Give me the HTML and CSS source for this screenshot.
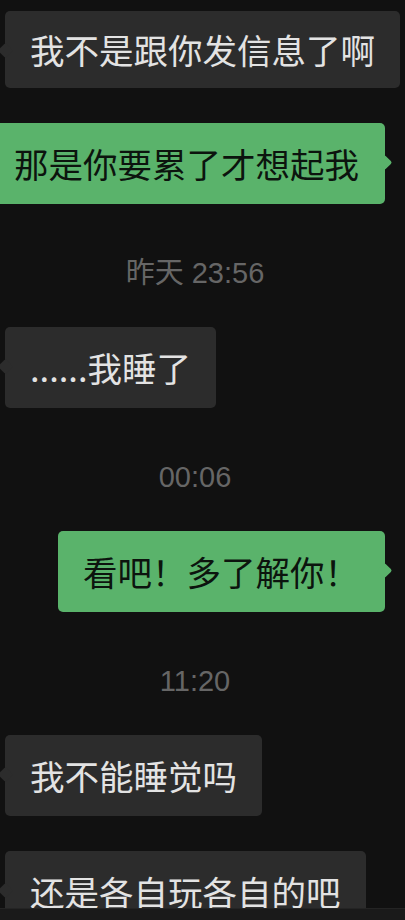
FILE: index.html
```html
<!DOCTYPE html>
<html lang="zh-CN">
  <head>
    <meta charset="utf-8">
    <title>聊天</title>
    <link rel="stylesheet" href="styles.css">
  </head>
  <body>
    <div class="screen">
      <div class="chat">
        <div class="row left first">
          <div class="bubble">我不是跟你发信息了啊</div>
        </div>
        <div class="row right">
          <div class="bubble">那是你要累了才想起我</div>
        </div>

        <div class="time">昨天 23:56</div>
        <div class="row left">
          <div class="bubble">......我睡了</div>
        </div>

        <div class="time">00:06</div>
        <div class="row right">
          <div class="bubble">看吧！多了解你！</div>
        </div>

        <div class="time">11:20</div>
        <div class="row left">
          <div class="bubble">我不能睡觉吗</div>
        </div>
        <div class="row left">
          <div class="bubble">还是各自玩各自的吧</div>
        </div>
      </div>
      <div class="bar"></div>
    </div>
  </body>
</html>
```

FILE: styles.css
```css
html, body {
  margin: 0;
  padding: 0;
  background: #111111;
}

.screen {
  height: 920px;
  display: flex;
  flex-direction: column;
  overflow: hidden;
}

.chat {
  flex: 1;
  overflow: hidden;
  display: flex;
  flex-direction: column;
  gap: 35px;
  padding-top: 11px;
}

.row {
  display: flex;
  padding: 0 20px 0 5px;
}
.row.right {
  justify-content: flex-end;
}

.bubble {
  position: relative;
  flex-shrink: 0;
  white-space: nowrap;
  font-family: "Noto Sans CJK SC", "Liberation Sans", sans-serif;
  font-size: 34.5px;
  line-height: 45px;
  padding: 18px 25px;
  border-radius: 5px;
  background: #2c2c2c;
  color: #e3e3e3;
}
.row.first .bubble {
  padding-top: 16px;
  padding-bottom: 16px;
}
.row.right .bubble {
  background: #5ab36b;
  color: #0c140e;
  padding-right: 26px;
}

/* little tail pointing at the speaker */
.bubble::before {
  content: "";
  position: absolute;
  top: 34px;
  width: 11px;
  height: 11px;
  border-radius: 2px;
  background: inherit;
  transform: rotate(45deg);
}
.row.left .bubble::before {
  left: -5px;
}
.row.right .bubble::before {
  right: -5px;
}

.time {
  font-family: "Liberation Sans", "Noto Sans CJK SC", sans-serif;
  font-size: 29px;
  line-height: 34px;
  color: #666666;
  text-align: center;
  padding-right: 15px;
  margin: 17px 0 2px;
}

.bar {
  height: 11px;
  background: #1a1a1a;
  border-top: 1px solid #242424;
}
```
